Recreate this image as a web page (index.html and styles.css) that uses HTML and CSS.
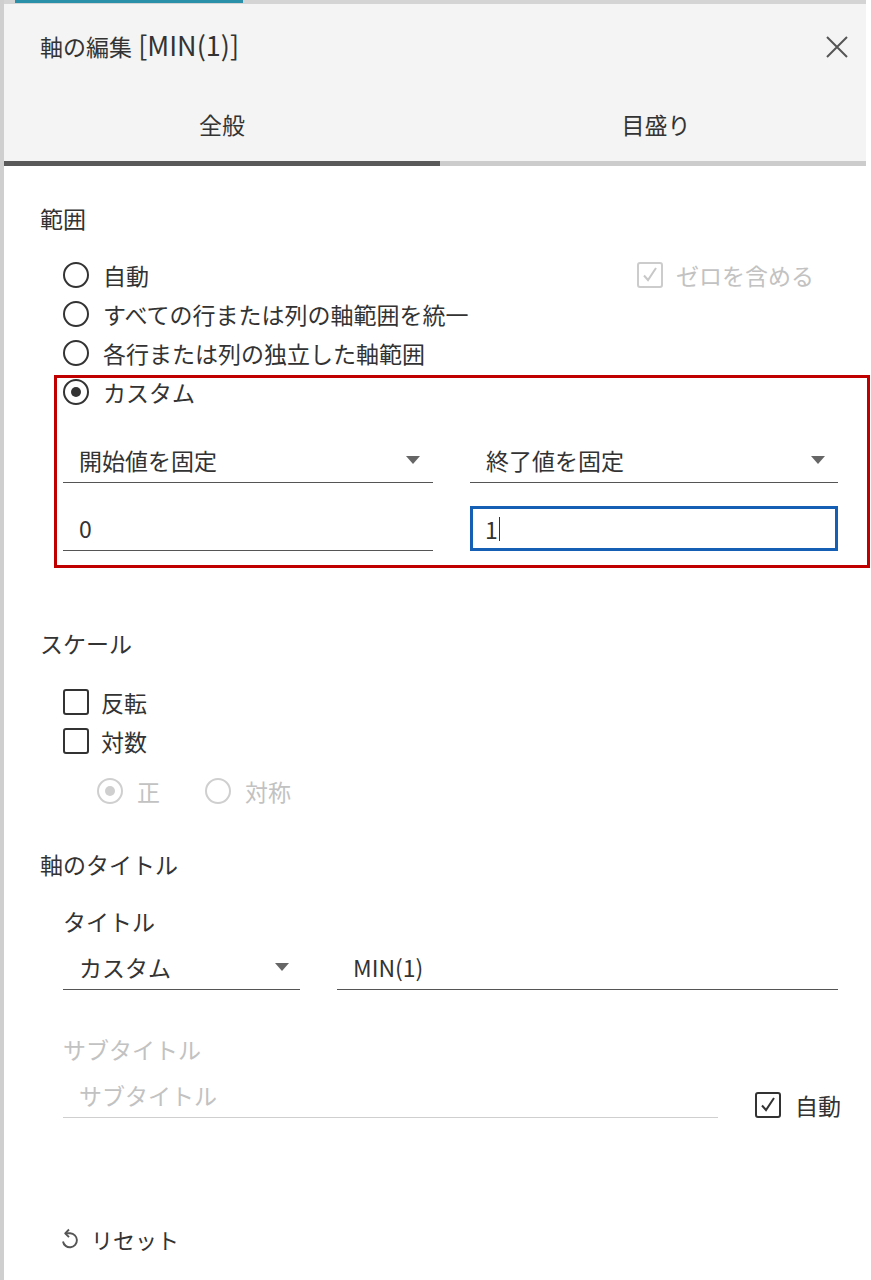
FILE: index.html
```html
<!DOCTYPE html>
<html lang="ja">
<head>
<meta charset="utf-8">
<title>軸の編集</title>
<link rel="stylesheet" href="styles.css">
</head>
<body>
<div class="dialog">
  <div class="topbar"><div class="topbar-accent"></div></div>
  <header class="header">
    <div class="title-row">
      <h1 class="title">軸の編集 <span class="title-latin">[MIN(1)]</span></h1>
      <svg class="close" width="22" height="22" viewBox="0 0 22 22" aria-label="閉じる">
        <path d="M1 1 L21 21 M21 1 L1 21" stroke="#555" stroke-width="2" fill="none"/>
      </svg>
    </div>
    <nav class="tabs">
      <div class="tab active">全般</div>
      <div class="tab">目盛り</div>
    </nav>
  </header>

  <main class="body">
    <div class="heading h-range">範囲</div>
    <div class="indent radio-list">
      <div class="opt">
        <span class="radio"></span><span>自動</span>
        <span class="zero">
          <span class="box disabled">
            <svg width="22" height="22" viewBox="0 0 22 22"><path d="M5 11.5 L9 16 L17 4" stroke="#c8c8c8" stroke-width="2" fill="none"/></svg>
          </span>
          <span class="muted">ゼロを含める</span>
        </span>
      </div>
      <div class="opt"><span class="radio"></span><span>すべての行または列の軸範囲を統一</span></div>
      <div class="opt"><span class="radio"></span><span>各行または列の独立した軸範囲</span></div>
      <div class="custom">
        <div class="opt"><span class="radio checked"></span><span>カスタム</span></div>
        <div class="fields">
          <div class="select"><span>開始値を固定</span><span class="caret"></span></div>
          <div class="select"><span>終了値を固定</span><span class="caret"></span></div>
          <div class="input"><span>0</span></div>
          <div class="input focused"><span class="cursor">1</span></div>
        </div>
        <div class="highlight"></div>
      </div>
    </div>

    <div class="heading h-scale">スケール</div>
    <div class="indent checks">
      <div class="opt chk"><span class="box"></span><span>反転</span></div>
      <div class="opt chk"><span class="box"></span><span>対数</span></div>
      <div class="opt sub-radios">
        <span class="radio checked disabled"></span><span class="muted lbl-pos">正</span>
        <span class="radio disabled"></span><span class="muted">対称</span>
      </div>
    </div>

    <div class="heading h-axis">軸のタイトル</div>
    <div class="indent">
      <div class="label lbl-title">タイトル</div>
      <div class="title-fields">
        <div class="select"><span>カスタム</span><span class="caret"></span></div>
        <div class="input"><span>MIN(1)</span></div>
      </div>
      <div class="label muted lbl-sub">サブタイトル</div>
      <div class="sub-row">
        <div class="input light"><span class="placeholder">サブタイトル</span></div>
        <div class="opt chk auto">
          <span class="box">
            <svg width="22" height="22" viewBox="0 0 22 22"><path d="M5 11.5 L9 16 L17 4" stroke="#333" stroke-width="2" fill="none"/></svg>
          </span>
          <span>自動</span>
        </div>
      </div>
      <div class="reset">
        <svg width="18" height="22" viewBox="0 0 18 22" aria-hidden="true">
          <path d="M8 1.5 L4.2 5.3 L8 9.1" stroke="#555" stroke-width="1.9" fill="none" stroke-linejoin="round"/>
          <path d="M4.8 5.3 H9.2 A7 7 0 1 1 2 13.5" stroke="#555" stroke-width="1.9" fill="none"/>
        </svg>
        <span>リセット</span>
      </div>
    </div>
  </main>
</div>
</body>
</html>
```

FILE: styles.css
```css
* { box-sizing: border-box; }

html, body {
  margin: 0;
  padding: 0;
  background: #ffffff;
}

body {
  font-family: "Noto Sans CJK JP", "Noto Sans", sans-serif;
  color: #333333;
  font-size: 23px;
}

.dialog {
  width: 866px;
  height: 1280px;
  border-left: 4px solid #cfcfcf;
  background: #ffffff;
}

.topbar {
  height: 4px;
  background: #d4d4d4;
}

.topbar-accent {
  margin-left: 11px;
  width: 228px;
  height: 3px;
  background: #2a8fa8;
}

.header {
  background: #f4f4f4;
}

.title-row {
  height: 85px;
  display: flex;
  align-items: center;
  justify-content: space-between;
  padding: 0 18px 3px 36px;
}

.title {
  margin: 0;
  font-size: 23px;
  font-weight: 400;
  line-height: 30px;
  color: #333;
  white-space: nowrap;
}

.title-latin {
  font-size: 27px;
  margin-left: 1px;
}

.close {
  display: block;
  margin-bottom: -3px;
}

.tabs {
  display: flex;
  height: 77px;
}

.tab {
  flex: 0 0 auto;
  display: flex;
  align-items: center;
  justify-content: center;
  padding-bottom: 2px;
  border-bottom: 5px solid #cccccc;
  font-size: 23px;
  color: #333;
}

.tab:first-child { width: 436px; }
.tab:last-child { width: 426px; padding-left: 6px; }

.tab.active {
  border-bottom-color: #595959;
}

.body {
  padding: 0 28px 0 36px;
}

.heading {
  height: 30px;
  line-height: 30px;
  font-size: 23px;
}

.h-range { margin-top: 37px; }
.h-scale { margin-top: 77px; }
.h-axis { margin-top: 39px; }

.indent {
  margin-left: 23px;
}

.radio-list { margin-top: 22px; }

.opt {
  display: flex;
  align-items: center;
  height: 39px;
  gap: 14px;
  line-height: 30px;
  white-space: nowrap;
}

.chk { gap: 12px; }

.radio {
  flex: 0 0 auto;
  width: 26px;
  height: 26px;
  border: 2px solid #333;
  border-radius: 50%;
  display: flex;
  align-items: center;
  justify-content: center;
}

.radio.checked::after {
  content: "";
  width: 10px;
  height: 10px;
  border-radius: 50%;
  background: #333;
}

.radio.disabled { border-color: #cfcfcf; }
.radio.disabled.checked::after { background: #cfcfcf; }

.box {
  flex: 0 0 auto;
  width: 26px;
  height: 26px;
  border: 2px solid #333;
  border-radius: 3px;
  display: flex;
  align-items: center;
  justify-content: center;
}

.box.disabled { border-color: #cccccc; }

.muted { color: #c2c2c2; }

.zero {
  margin-left: auto;
  margin-right: 24px;
  display: flex;
  align-items: center;
  gap: 13px;
}

.custom {
  position: relative;
}

.highlight {
  position: absolute;
  top: 3px;
  left: -9px;
  right: -32px;
  bottom: -17px;
  border: 3px solid #c00000;
  pointer-events: none;
}

.fields {
  margin-top: 27px;
  display: grid;
  grid-template-columns: 370px 368px;
  column-gap: 37px;
  row-gap: 23px;
}

.select {
  height: 45px;
  display: flex;
  align-items: center;
  justify-content: space-between;
  padding: 0 13px 0 16px;
  border-bottom: 1px solid #555;
  line-height: 30px;
}

.caret {
  width: 0;
  height: 0;
  border-left: 7px solid transparent;
  border-right: 7px solid transparent;
  border-top: 8px solid #666;
}

.input {
  height: 45px;
  display: flex;
  align-items: center;
  padding: 0 16px;
  border-bottom: 1px solid #555;
  line-height: 30px;
}

.input.focused {
  border: 3px solid #1560b5;
  padding-left: 12px;
}

.cursor {
  border-right: 1.5px solid #333;
  padding-right: 1px;
  line-height: 24px;
}

.checks { margin-top: 24px; }

.sub-radios {
  margin-top: 11px;
  margin-left: 34px;
}

.lbl-pos { margin-right: 31px; }

.label {
  height: 30px;
  line-height: 30px;
}

.lbl-title { margin-top: 27px; }
.lbl-sub { margin-top: 44px; }

.title-fields {
  margin-top: 9px;
  display: grid;
  grid-template-columns: 237px 501px;
  column-gap: 37px;
}

.title-fields .select { padding-right: 11px; }

.sub-row {
  margin-top: 9px;
  display: flex;
  align-items: flex-end;
  gap: 37px;
}

.sub-row .input {
  flex: 0 0 655px;
}

.input.light {
  border-bottom-color: #cfcfcf;
}

.placeholder { color: #c2c2c2; }

.auto {
  flex: 0 0 auto;
  height: 26px;
  gap: 14px;
}

.reset {
  margin-top: 106px;
  margin-left: -2px;
  height: 30px;
  display: flex;
  align-items: center;
  gap: 12px;
  font-size: 22px;
  line-height: 30px;
}

.reset svg { display: block; }
```
